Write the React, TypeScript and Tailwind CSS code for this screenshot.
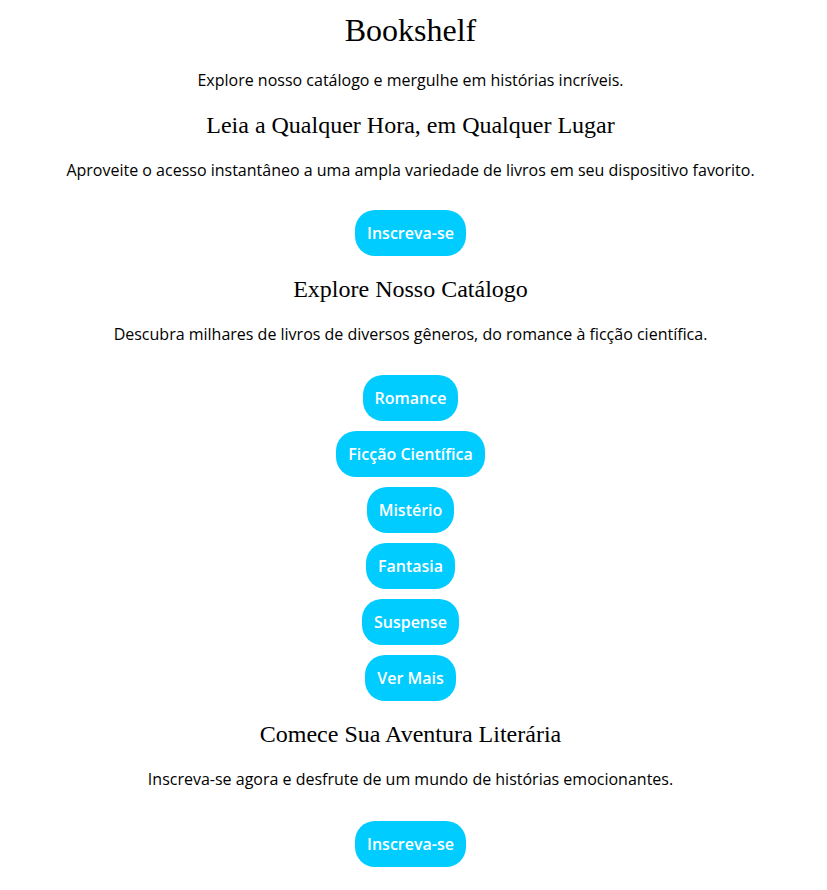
import React from "react";

const Btn = ({ children, className = "" }: { children: React.ReactNode; className?: string }) => (
  <button
    className={
      "bg-[#00ccff] text-white font-['Open_Sans',sans-serif] font-semibold text-[16px] leading-[24px] px-3 py-[11px] rounded-[20px] " +
      className
    }
  >
    {children}
  </button>
);

const H2 = ({ children, className = "" }: { children: React.ReactNode; className?: string }) => (
  <h2
    className={
      "font-['Liberation_Serif','Times_New_Roman',serif] text-[24px] leading-[28px] font-normal " + className
    }
  >
    {children}
  </h2>
);

const P = ({ children, className = "" }: { children: React.ReactNode; className?: string }) => (
  <p className={"font-['Open_Sans',sans-serif] text-[16px] leading-[22px] " + className}>{children}</p>
);

export default function App() {
  return (
    <div className="w-[827px] min-h-[890px] bg-white text-black flex flex-col items-center text-center pr-[6px]">
      <h1 className="mt-3 font-['Liberation_Serif','Times_New_Roman',serif] text-[32px] leading-[37px] font-normal">
        Bookshelf
      </h1>
      <P className="mt-5">Explore nosso catálogo e mergulhe em histórias incríveis.</P>
      <H2 className="mt-5">Leia a Qualquer Hora, em Qualquer Lugar</H2>
      <P className="mt-5">
        Aproveite o acesso instantâneo a uma ampla variedade de livros em seu dispositivo favorito.
      </P>
      <Btn className="mt-[29px]">Inscreva-se</Btn>
      <H2 className="mt-[19px]">Explore Nosso Catálogo</H2>
      <P className="mt-5">
        Descubra milhares de livros de diversos gêneros, do romance à ficção científica.
      </P>
      <div className="mt-[30px] flex flex-col items-center gap-[10px]">
        <Btn>Romance</Btn>
        <Btn>Ficção Científica</Btn>
        <Btn>Mistério</Btn>
        <Btn>Fantasia</Btn>
        <Btn>Suspense</Btn>
        <Btn>Ver Mais</Btn>
      </div>
      <H2 className="mt-[19px]">Comece Sua Aventura Literária</H2>
      <P className="mt-5">Inscreva-se agora e desfrute de um mundo de histórias emocionantes.</P>
      <Btn className="mt-[31px]">Inscreva-se</Btn>
    </div>
  );
}
